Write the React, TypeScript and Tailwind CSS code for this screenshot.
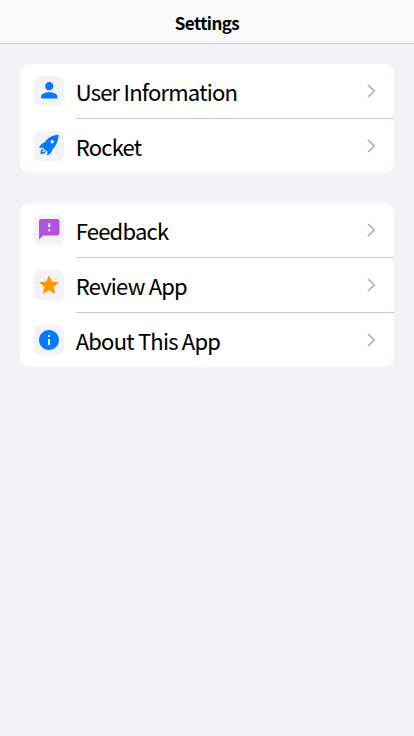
import type { ReactNode } from "react";
import { MdPerson, MdFeedback, MdStar, MdInfo } from "react-icons/md";

type Item = { label: string; icon: ReactNode; color: string };

function RocketIcon() {
  return (
    <svg width="24" height="24" viewBox="0.5 1 24 24" fill="currentColor">
      <path
        fillRule="evenodd"
        d="M22.2 1.6C17 2.3 13 3.7 10 7L8 9.4C5.4 10 3.4 12 2.7 15.1L7 14.6C7.2 16.6 8.9 18.2 11 18.3L10.5 22.6C13.9 21.3 15.5 19.1 15.7 16.7L17.5 14.8C20.3 11.6 21.7 7.5 22.2 1.6ZM15.7 7.1a1.7 1.7 0 1 0 0 3.4a1.7 1.7 0 1 0 0-3.4Z"
      />
      <path d="M6.2 15.6C4.4 16.2 3.9 18.5 4.1 21C6.7 21.2 8.9 20.4 9.5 18.8L8 18.1C7.6 18.9 6.9 19.2 6 19.1C5.9 18.2 6.1 17.5 6.9 17Z" />
    </svg>
  );
}

const groups: Item[][] = [
  [
    { label: "User Information", icon: <MdPerson size={24.5} />, color: "text-[#007aff]" },
    { label: "Rocket", icon: <RocketIcon />, color: "text-[#007aff]" },
  ],
  [
    { label: "Feedback", icon: <MdFeedback size={24.5} />, color: "text-[#af52de]" },
    { label: "Review App", icon: <MdStar size={24} />, color: "text-[#ff9500]" },
    { label: "About This App", icon: <MdInfo size={24} />, color: "text-[#007aff]" },
  ],
];

function Row({ item, last }: { item: Item; last: boolean }) {
  return (
    <li className={`flex pl-[14px] ${last ? "h-[54px]" : "h-[55px]"}`}>
      <span className={`mt-3 flex size-[30px] shrink-0 items-center justify-center rounded-[7px] bg-[#f2f2f7] pb-px ${item.color}`}>
        {item.icon}
      </span>
      <div className={`ml-3 flex flex-1 justify-between pr-[18px] ${last ? "" : "border-b border-[#c8c7cc]"}`}>
        <span className="-ml-[0.3px] pt-2.5 text-[22px] leading-[34px] tracking-[-0.78px] text-black [-webkit-text-stroke:0.08px_black]">
          {item.label}
        </span>
        <svg className="mt-5 h-[14px] w-[9px]" viewBox="0 0 9 14" fill="none" stroke="#b0b0b3" strokeWidth="1.7">
          <path d="M1 1l6.2 6L1 13" />
        </svg>
      </div>
    </li>
  );
}

export default function App() {
  return (
    <div className="min-h-screen bg-[#f2f2f7] font-['Noto_Sans_CJK_JP',sans-serif]">
      <header className="h-11 border-b border-[#d3d3d5] bg-[#f9f9f9] pt-[11px] text-center">
        <h1 className="text-[17px] font-bold leading-[24px] tracking-[-0.54px] text-black">Settings</h1>
      </header>
      <main className="flex flex-col gap-[30px] px-5 pt-5">
        {groups.map((items, g) => (
          <ul key={g} className="overflow-hidden rounded-[10px] bg-white">
            {items.map((item, i) => (
              <Row key={item.label} item={item} last={i === items.length - 1} />
            ))}
          </ul>
        ))}
      </main>
    </div>
  );
}
